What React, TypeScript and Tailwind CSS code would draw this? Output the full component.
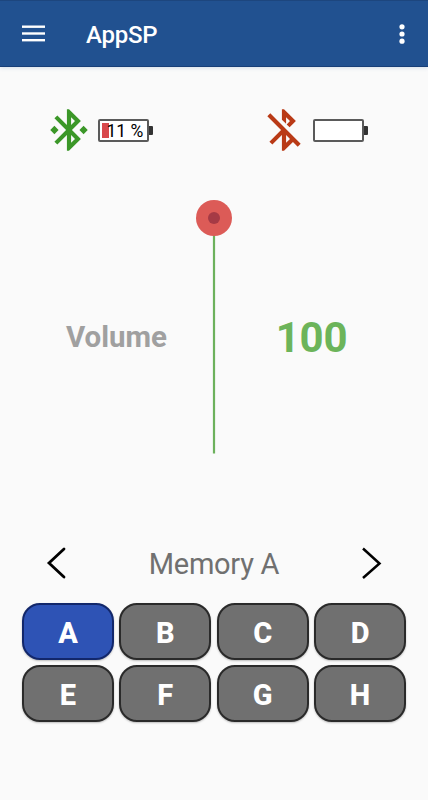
interface BatteryProps {
    level?: number;
}

interface MemoryButtonProps {
    label: string;
    active: boolean;
}

const memories = ['A', 'B', 'C', 'D', 'E', 'F', 'G', 'H'];

function Battery({ level }: BatteryProps) {
    return (
        <div className="flex items-center w-[56px]">
            <div className="relative w-[51px] h-[23px] shrink-0 rounded-[2px] border-2 border-[#5a5a5a] bg-white">
                {level !== undefined && (
                    <>
                        <div className="absolute left-[2px] top-[2px] w-[7px] h-[15px] bg-[#d8484c]"></div>
                        <span className="absolute left-[6.5px] top-0 leading-[20px] whitespace-nowrap text-[17.5px] text-black">{level} %</span>
                    </>
                )}
            </div>
            <div className="w-[4px] h-[9px] rounded-r-[1px] bg-[#333333]"></div>
        </div>
    );
}

function MemoryButton({ label, active }: MemoryButtonProps) {
    return (
        <button
            className={`h-[57px] rounded-[18px] border-2 pt-[3px] text-[29px] font-extrabold leading-none text-white shadow-[0_1px_2px_rgba(0,0,0,0.25)] ${active ? 'bg-[#2e53b5] border-[#12276b]' : 'bg-[#707070] border-[#2a2a2a]'}`}
        >
            {label}
        </button>
    );
}

export default function App() {
    return (
        <div className="flex flex-col w-[428px] h-[800px] bg-[#fafafa] overflow-hidden" style={{ fontFamily: 'Roboto, "Liberation Sans", sans-serif' }}>
            {/* App bar */}
            <header className="flex items-center h-[67px] shrink-0 border-t border-b border-t-[#1d467e] border-b-[#173f78] bg-[#215190] pl-[22px] pr-[23px] shadow-[0_1px_4px_rgba(60,110,170,0.2)]">
                <svg width="23" height="17" viewBox="0 0 23 17" fill="#ffffff">
                    <rect y="0.5" width="23" height="2.4" />
                    <rect y="7.3" width="23" height="2.4" />
                    <rect y="14" width="23" height="2.4" />
                </svg>
                <h1 className="ml-[41px] mt-[2px] text-[24px] tracking-[-0.25px] font-medium leading-none text-white">AppSP</h1>
                <svg className="ml-auto" width="6" height="20" viewBox="0 0 6 20" fill="#ffffff">
                    <circle cx="3" cy="2.8" r="2.6" />
                    <circle cx="3" cy="10" r="2.6" />
                    <circle cx="3" cy="17.2" r="2.6" />
                </svg>
            </header>

            {/* Device status */}
            <section className="flex items-center h-[50px] mt-[38px] pl-[44px]">
                <svg width="50" height="50" viewBox="0 0 24 24" fill="#3b9728">
                    <path d="M7 12l-2-2-2 2 2 2 2-2zm10.71-4.29L12 2h-1v7.59L6.41 5 5 6.41 10.59 12 5 17.59 6.41 19 11 14.41V22h1l5.71-5.71-4.3-4.29 4.3-4.29zM13 5.83l1.88 1.88L13 9.59V5.83zm1.88 10.46L13 18.17v-3.76l1.88 1.88zM19 10l-2 2 2 2 2-2-2-2z" />
                </svg>
                <div className="ml-[4px]"><Battery level={11} /></div>
                <svg className="ml-[105px]" width="50" height="50" viewBox="0 0 24 24" fill="#b93a16">
                    <path d="M13 5.83l1.88 1.88-1.6 1.6 1.41 1.41 3.02-3.02L12 2h-1v5.03l2 2v-3.2zM5.41 4L4 5.41 10.59 12 5 17.59 6.41 19 11 14.41V22h1l4.29-4.29 2.3 2.29L20 18.59 5.41 4zM13 18.17v-3.76l1.88 1.88L13 18.17z" />
                </svg>
                <div className="ml-[4px]"><Battery /></div>
            </section>

            {/* Volume */}
            <section className="grid grid-cols-[196px_36px_196px] h-[254px] mt-[45px]">
                <div className="flex items-center justify-center pl-[37px] pt-[22px] text-[29.5px] font-bold leading-none text-[#a0a0a0]">Volume</div>
                <svg width="36" height="254" viewBox="0 0 36 254">
                    <rect x="16.9" y="30" width="2.2" height="223.5" fill="#6cb15c" />
                    <circle cx="18" cy="18" r="18" fill="#dc5b57" />
                    <circle cx="18" cy="18" r="6" fill="#a53a45" />
                </svg>
                <div className="flex items-center justify-center pr-[37px] pt-[22px] text-[42px] tracking-[-0.3px] font-bold leading-none text-[#6cb45a]">100</div>
            </section>

            {/* Memory selector */}
            <section className="flex items-center justify-between h-[36px] mt-[91px] pl-[46px] pr-[46px]">
                <svg width="21" height="34" viewBox="0 0 21 34" fill="none" stroke="#000000" strokeWidth="2.8" strokeLinecap="round">
                    <path d="M18 3L3 17l15 14" />
                </svg>
                <span className="pt-[2px] text-[29px] tracking-[-0.25px] leading-none text-[#707070]">Memory A</span>
                <svg width="21" height="34" viewBox="0 0 21 34" fill="none" stroke="#000000" strokeWidth="2.5">
                    <path d="M2 2.5l16.5 15L2 32" />
                </svg>
            </section>
            <section className="grid grid-cols-4 gap-x-[5.5px] gap-y-[5px] mt-[22px] mx-[22px]">
                {memories.map((memory) => (
                    <MemoryButton key={memory} label={memory} active={memory === 'A'} />
                ))}
            </section>
        </div>
    );
}
